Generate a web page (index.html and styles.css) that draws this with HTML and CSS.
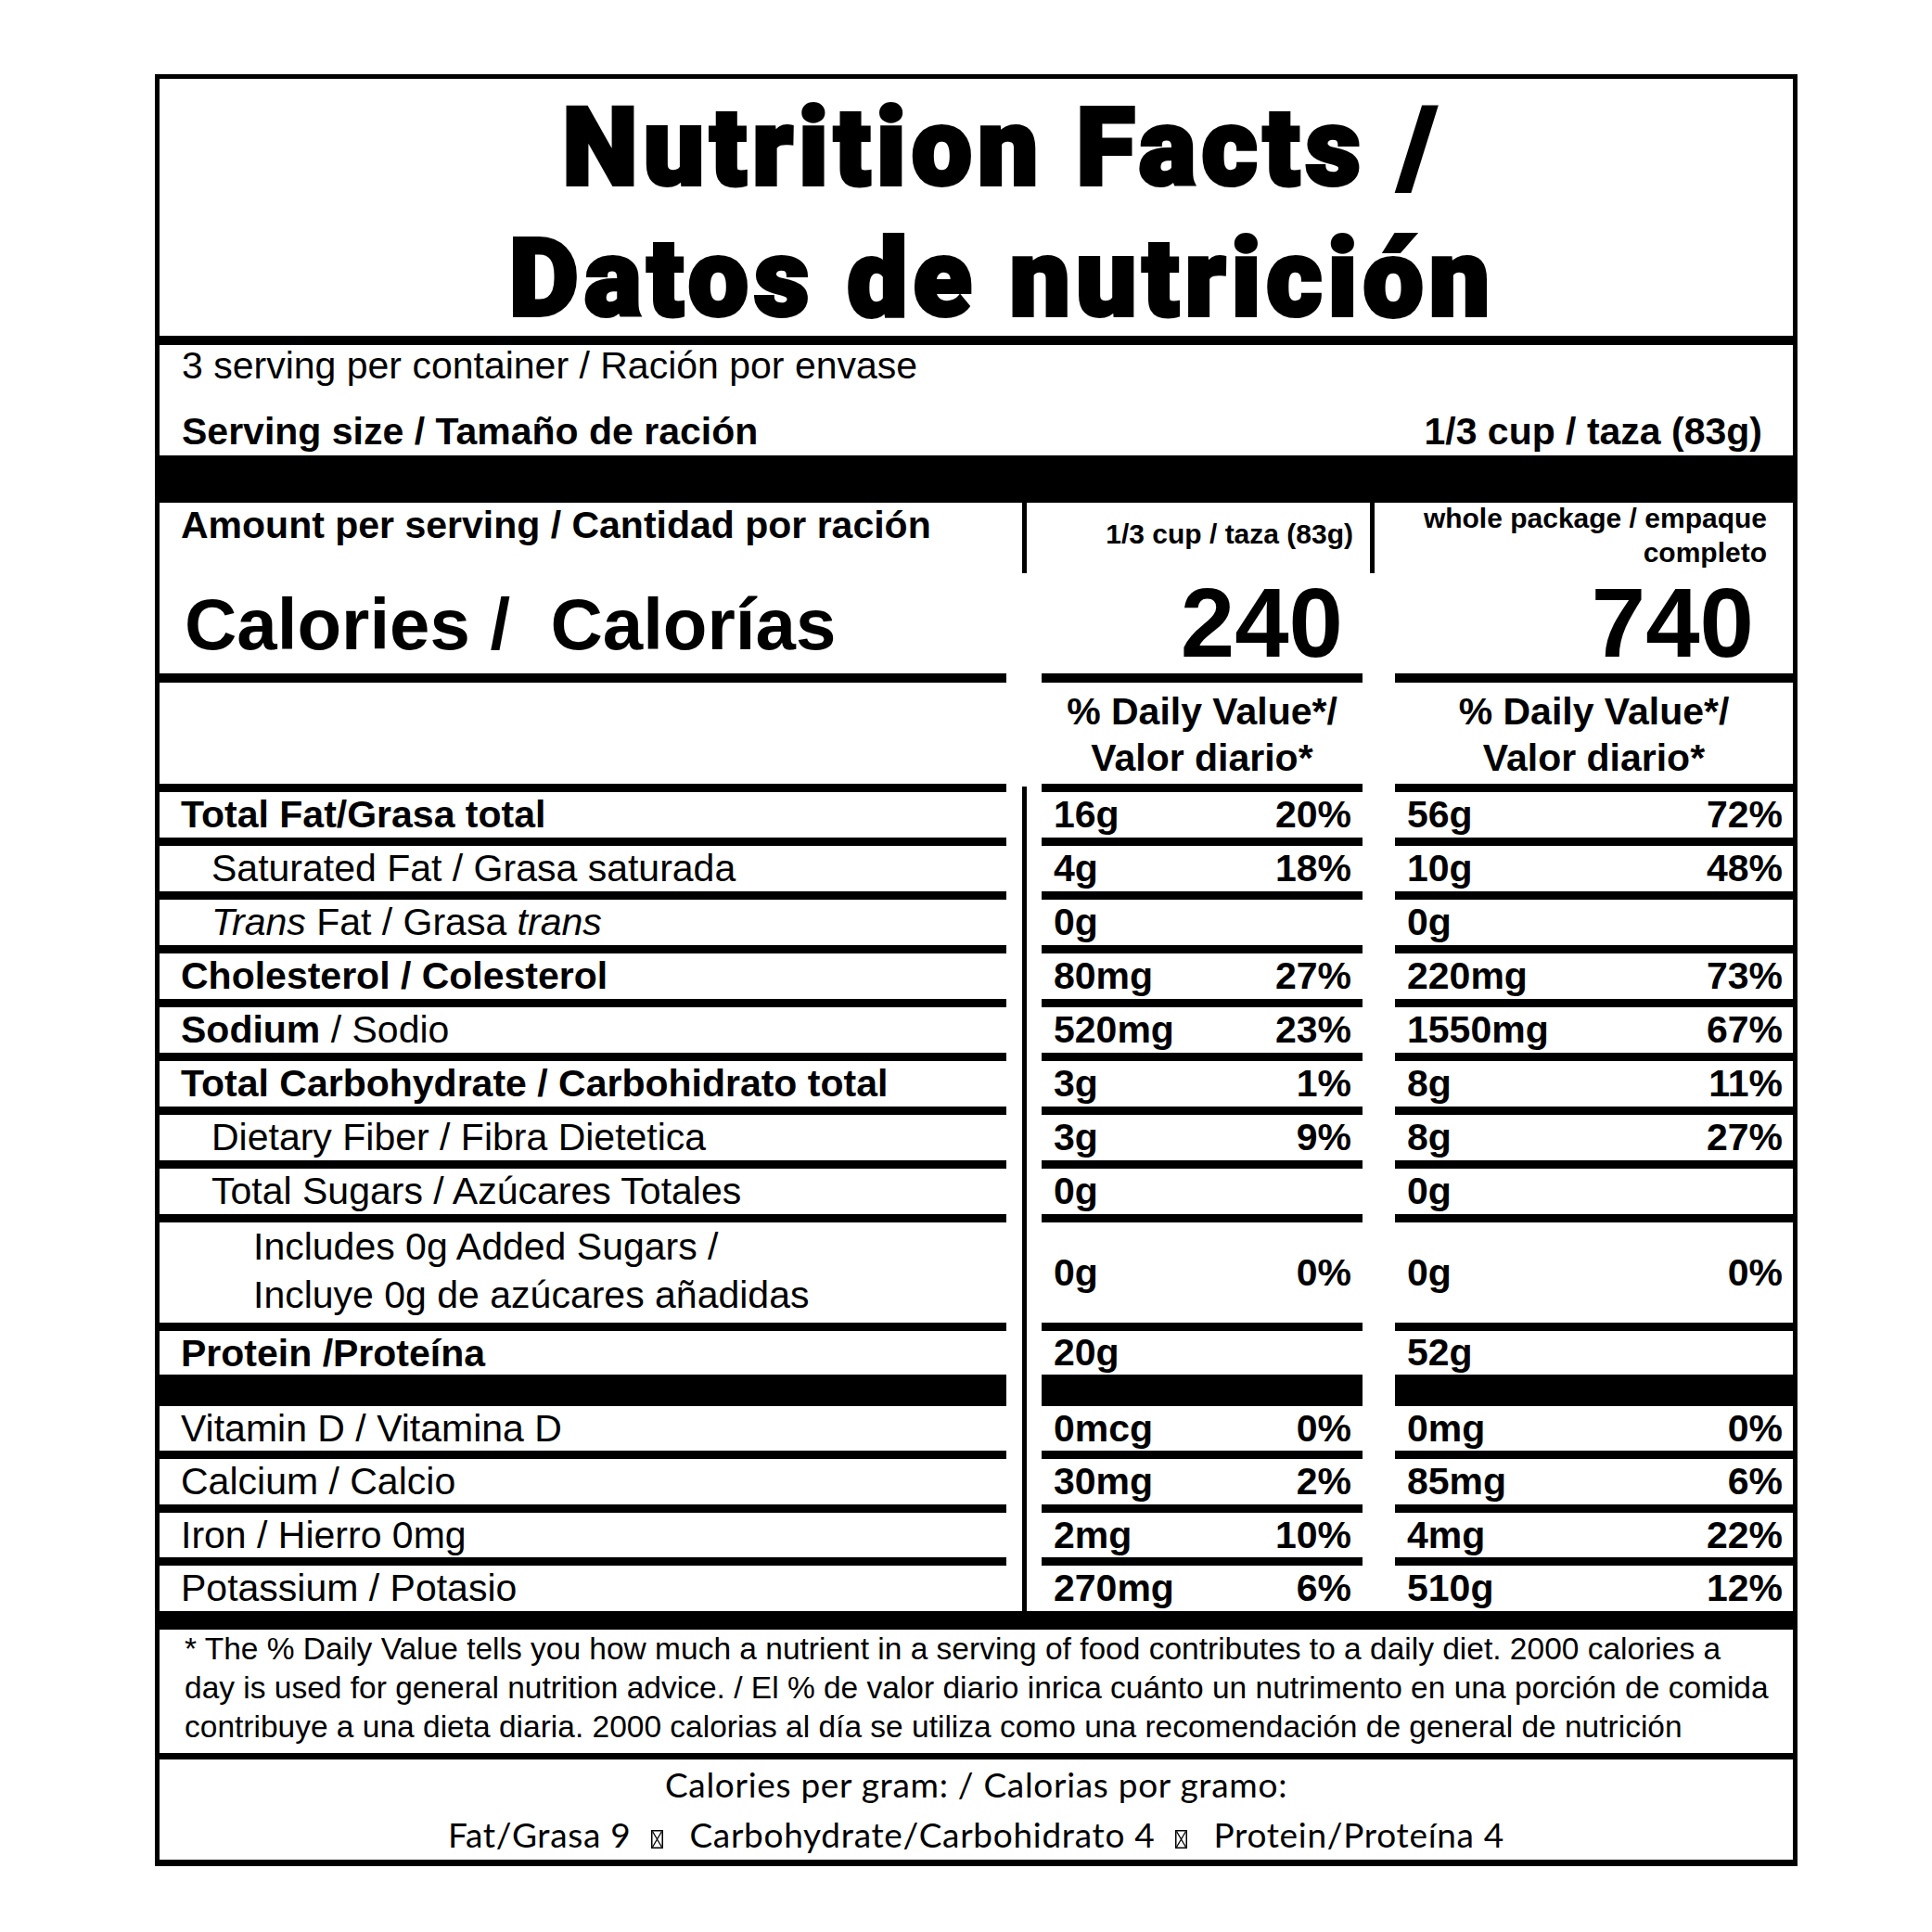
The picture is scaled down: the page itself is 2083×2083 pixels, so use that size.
FILE: index.html
```html
<!DOCTYPE html>
<html lang="en">
<head>
<meta charset="utf-8">
<title>Nutrition Facts / Datos de nutrición</title>
<link rel="stylesheet" href="styles.css">
</head>
<body>
<div class="label">
  <h1 class="title">Nutrition Facts /<br>Datos de nutrición</h1>

  <div class="servings">
    <div class="per-container">3 serving per container / Ración por envase</div>
    <div class="size-row"><span>Serving size / Tamaño de ración</span><span>1/3 cup / taza (83g)</span></div>
  </div>

  <div class="facts">
    <div class="c1 amount">Amount per serving / Cantidad por ración</div>
    <div class="c2 vrule vrule-a"></div>
    <div class="c3 hdr2">1/3 cup / taza (83g)</div>
    <div class="c4 vrule vrule-b"></div>
    <div class="c5 hdr3">whole package / empaque<br>completo</div>

    <div class="c1 cal cal-label">Calories / &nbsp;Calorías</div>
    <div class="c3 cal cal-num cal2">240</div>
    <div class="c5 cal cal-num cal3">740</div>

    <div class="c1 dv"></div>
    <div class="c3 dv dv-text">% Daily Value*/<br>Valor diario*</div>
    <div class="c5 dv dv-text">% Daily Value*/<br>Valor diario*</div>

    <div class="divider"></div>

    <div class="c1 n lab b">Total Fat/Grasa total</div>
    <div class="c3 n v"><span>16g</span><span>20%</span></div>
    <div class="c5 n v"><span>56g</span><span>72%</span></div>

    <div class="c1 n lab ind1">Saturated Fat / Grasa saturada</div>
    <div class="c3 n v"><span>4g</span><span>18%</span></div>
    <div class="c5 n v"><span>10g</span><span>48%</span></div>

    <div class="c1 n lab ind1"><i>Trans</i> Fat / Grasa <i>trans</i></div>
    <div class="c3 n v"><span>0g</span></div>
    <div class="c5 n v"><span>0g</span></div>

    <div class="c1 n lab b">Cholesterol / Colesterol</div>
    <div class="c3 n v"><span>80mg</span><span>27%</span></div>
    <div class="c5 n v"><span>220mg</span><span>73%</span></div>

    <div class="c1 n lab"><b>Sodium</b> / Sodio</div>
    <div class="c3 n v"><span>520mg</span><span>23%</span></div>
    <div class="c5 n v"><span>1550mg</span><span>67%</span></div>

    <div class="c1 n lab b">Total Carbohydrate / Carbohidrato total</div>
    <div class="c3 n v"><span>3g</span><span>1%</span></div>
    <div class="c5 n v"><span>8g</span><span>11%</span></div>

    <div class="c1 n lab ind1">Dietary Fiber / Fibra Dietetica</div>
    <div class="c3 n v"><span>3g</span><span>9%</span></div>
    <div class="c5 n v"><span>8g</span><span>27%</span></div>

    <div class="c1 n lab ind1">Total Sugars / Azúcares Totales</div>
    <div class="c3 n v"><span>0g</span></div>
    <div class="c5 n v"><span>0g</span></div>

    <div class="c1 n inc lab ind2">Includes 0g Added Sugars /<br>Incluye 0g de azúcares añadidas</div>
    <div class="c3 n inc v"><span>0g</span><span>0%</span></div>
    <div class="c5 n inc v"><span>0g</span><span>0%</span></div>

    <div class="c1 n prot lab b">Protein /Proteína</div>
    <div class="c3 n prot v"><span>20g</span></div>
    <div class="c5 n prot v"><span>52g</span></div>

    <div class="c1 n r48 lab">Vitamin D / Vitamina D</div>
    <div class="c3 n r48 v"><span>0mcg</span><span>0%</span></div>
    <div class="c5 n r48 v"><span>0mg</span><span>0%</span></div>

    <div class="c1 n lab">Calcium / Calcio</div>
    <div class="c3 n v"><span>30mg</span><span>2%</span></div>
    <div class="c5 n v"><span>85mg</span><span>6%</span></div>

    <div class="c1 n r48 lab">Iron / Hierro 0mg</div>
    <div class="c3 n r48 v"><span>2mg</span><span>10%</span></div>
    <div class="c5 n r48 v"><span>4mg</span><span>22%</span></div>

    <div class="c1 n last lab">Potassium / Potasio</div>
    <div class="c3 n last v"><span>270mg</span><span>6%</span></div>
    <div class="c5 n last v"><span>510g</span><span>12%</span></div>
  </div>

  <p class="footnote">* The % Daily Value tells you how much a nutrient in a serving of food contributes to a daily diet. 2000 calories a<br>day is used for general nutrition advice. / El % de valor diario inrica cuánto un nutrimento en una porción de comida<br>contribuye a una dieta diaria. 2000 calorias al día se utiliza como una recomendación de general de nutrición</p>

  <div class="cpg">
    <div>Calories per gram: / Calorias por gramo:</div>
    <div>Fat/Grasa 9<svg class="tofu" width="13" height="20" viewBox="0 0 13 20"><rect x="0.75" y="0.75" width="11.5" height="18.5" fill="none" stroke="#000" stroke-width="1.5"/><path d="M1.5 1.5 L11.5 18.5 M11.5 1.5 L1.5 18.5" stroke="#000" stroke-width="1.3" fill="none"/></svg>Carbohydrate/Carbohidrato 4<svg class="tofu" width="13" height="20" viewBox="0 0 13 20"><rect x="0.75" y="0.75" width="11.5" height="18.5" fill="none" stroke="#000" stroke-width="1.5"/><path d="M1.5 1.5 L11.5 18.5 M11.5 1.5 L1.5 18.5" stroke="#000" stroke-width="1.3" fill="none"/></svg>Protein/Proteína 4</div>
  </div>
</div>
</body>
</html>
```

FILE: styles.css
```css
* { box-sizing: border-box; }

html, body {
  margin: 0;
  padding: 0;
  background: #fff;
}

body {
  font-family: "Liberation Sans", Arial, sans-serif;
  color: #000;
}

.label {
  margin: 80px 0 0 167px;
  width: 1771px;
  border: 5px solid #000;
  border-bottom-width: 7px;
}

/* Title */
.title {
  margin: 0;
  height: 287px;
  border-bottom: 10px solid #000;
  padding: 4px 0 0 56px;
  font-family: Roboto, "Liberation Sans", sans-serif;
  font-weight: 900;
  font-size: 116px;
  line-height: 141px;
  text-align: center;
  letter-spacing: 6px;
  -webkit-text-stroke: 4px #000;
}

/* Servings */
.servings {
  height: 170px;
  border-bottom: 51px solid #000;
  padding: 0 33px 0 24px;
  font-size: 41px;
  line-height: 44px;
}

.size-row {
  display: flex;
  justify-content: space-between;
  font-weight: 700;
  margin-top: 27px;
}

/* Facts grid */
.facts {
  display: grid;
  grid-template-columns: 913px 38px 346px 35px 429px;
}

.c1 { grid-column: 1; }
.c2 { grid-column: 2; }
.c3 { grid-column: 3; }
.c4 { grid-column: 4; }
.c5 { grid-column: 5; }

.amount {
  height: 76px;
  padding: 2px 0 0 23px;
  font-size: 41px;
  line-height: 44px;
  font-weight: 700;
}

.vrule {
  width: 5px;
  background: #000;
}
.vrule-a { margin-left: 17px; }
.vrule-b { margin-left: 8px; }

.hdr2 {
  padding: 16px 10px 0 0;
  text-align: right;
  font-size: 30px;
  line-height: 36px;
  font-weight: 700;
}

.hdr3 {
  margin-top: -2px;
  padding: 0 28px 0 0;
  text-align: right;
  font-size: 30px;
  line-height: 37px;
  font-weight: 700;
}

.cal {
  height: 118px;
  border-bottom: 10px solid #000;
  font-weight: 700;
}

.cal-label {
  padding: 2px 0 0 27px;
  font-size: 78px;
  line-height: 106px;
  white-space: nowrap;
}

.cal-num {
  text-align: right;
  font-size: 105px;
  line-height: 108px;
}
.cal2 { padding-right: 21px; }
.cal3 { padding-right: 42px; }

.dv {
  height: 118px;
  border-bottom: 9px solid #000;
}

.dv-text {
  padding-top: 6px;
  text-align: center;
  font-size: 41px;
  line-height: 50px;
  font-weight: 700;
}

.divider {
  grid-column: 2;
  grid-row: 4 / 18;
  width: 5px;
  margin: -6px 0 0 17px;
  background: #000;
}

/* Nutrient rows */
.n {
  height: 58px;
  border-bottom: 9px solid #000;
  font-size: 41px;
  line-height: 49px;
}

.n.inc { height: 117px; }
.n.prot { height: 81px; border-bottom-width: 34px; }
.n.r48 { height: 57px; }
.n.last { height: 49px; border-bottom: 0; }

.lab {
  padding-left: 23px;
  white-space: nowrap;
}
.lab.b { font-weight: 700; }
.lab.ind1 { padding-left: 56px; }
.lab.ind2 { padding-left: 101px; line-height: 52px; }

.v {
  display: flex;
  align-items: center;
  justify-content: space-between;
  padding: 0 12px 0 13px;
  font-weight: 700;
}
.c5.v { padding-right: 11px; }

/* Footnote */
.footnote {
  margin: 0;
  height: 160px;
  border-top: 20px solid #000;
  border-bottom: 7px solid #000;
  padding: 0 0 0 27px;
  font-size: 33.5px;
  line-height: 42px;
  white-space: nowrap;
}

/* Calories per gram */
.cpg {
  height: 108px;
  text-align: center;
  font-family: Lato, "Open Sans", sans-serif;
  font-size: 37px;
  line-height: 54px;
  letter-spacing: 0.7px;
  white-space: nowrap;
}

.tofu {
  display: inline-block;
  vertical-align: -1px;
  margin: 0 28px 0 22px;
}
```
